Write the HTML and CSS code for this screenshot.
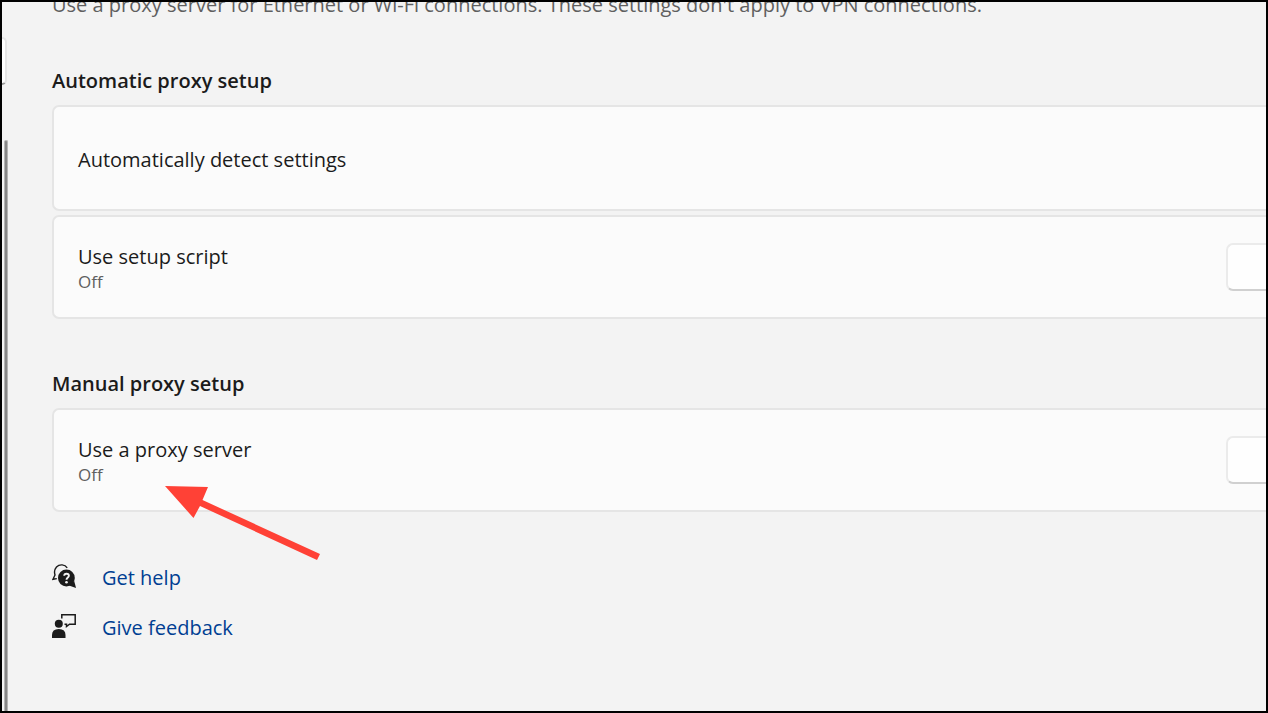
FILE: index.html
```html
<!DOCTYPE html>
<html lang="en">
<head>
  <meta charset="UTF-8" />
  <meta name="viewport" content="width=device-width, initial-scale=1.0"/>
  <title>Proxy</title>
  <link rel="stylesheet" href="styles.css">
</head>
<body>
  <div class="window">
    <aside class="sidebar">
      <div class="search-edge"></div>
      <div class="scrollbar"></div>
    </aside>

    <main class="content">
      <p class="intro">Use a proxy server for Ethernet or Wi-Fi connections. These settings don't apply to VPN connections.</p>

      <section class="group">
        <h2>Automatic proxy setup</h2>
        <div class="card card-tall">
          <div class="card-title">Automatically detect settings</div>
        </div>
        <div class="card">
          <div class="card-text">
            <div class="card-title" id="script-title">Use setup script</div>
            <div class="card-status">Off</div>
          </div>
          <button class="card-button" type="button" aria-labelledby="script-title"></button>
        </div>
      </section>

      <section class="group">
        <h2>Manual proxy setup</h2>
        <div class="card">
          <div class="card-text">
            <div class="card-title" id="proxy-title">Use a proxy server</div>
            <div class="card-status">Off</div>
          </div>
          <button class="card-button" type="button" aria-labelledby="proxy-title"></button>
          <svg class="arrow" width="158" height="76" viewBox="0 0 158 76" aria-hidden="true">
            <path d="M0 0L43 1L37.500 14L155 68L152 74L35 20L28.500 32Z" fill="#ff4136"/>
          </svg>
        </div>
      </section>

      <nav class="links">
        <a href="#">
          <svg width="24" height="24" viewBox="0 0 24 24" aria-hidden="true">
            <path d="M15.200 3.800C13 .2 7.500 -.2 4.500 3C2.300 5.500 2.200 8.500 3 11L1 15.300L4.800 14.600" fill="none" stroke="#1b1b1b" stroke-width="1.400"/>
            <circle cx="14.400" cy="14" r="8.400" fill="#1b1b1b"/>
            <path d="M22.200 17L24 24L17 21.500Z" fill="#1b1b1b"/>
            <path d="M12.200 11.800C12.200 9 16.900 9 16.900 11.800C16.900 13.600 14.500 13.600 14.500 15.800" fill="none" stroke="#f3f3f3" stroke-width="1.900"/>
            <circle cx="14.500" cy="18.200" r="1.300" fill="#f3f3f3"/>
          </svg>
          <span>Get help</span>
        </a>
        <a href="#">
          <svg width="24" height="24" viewBox="0 0 24 24" aria-hidden="true">
            <circle cx="6.800" cy="9.800" r="4" fill="#1b1b1b"/>
            <path d="M0 24V21Q0 15 6.800 15T13.500 21V24Z" fill="#1b1b1b"/>
            <path d="M9.800 4.500V.8H23.200V10.200H17.500L14.500 12.500V10.200H12.500" fill="none" stroke="#1b1b1b" stroke-width="1.500"/>
          </svg>
          <span>Give feedback</span>
        </a>
      </nav>
    </main>
  </div>
</body>
</html>
```
FILE: styles.css
```css
* {
  box-sizing: border-box;
}

body {
  margin: 0;
  font-family: "Segoe UI", "Open Sans", "Noto Sans", sans-serif;
  font-size: 20px;
  line-height: 28px;
  color: #1b1b1b;
  background: #f3f3f3;
}

.window {
  display: flex;
  height: 100vh;
  border: 2px solid #000;
  overflow: hidden;
}

.sidebar {
  display: flex;
  flex-direction: column;
  align-items: flex-start;
  width: 50px;
  flex-shrink: 0;
  padding-top: 35px;
}

.search-edge {
  width: 5px;
  height: 48px;
  background: #fff;
  border: 2px solid #e5e5e5;
  border-left: 0;
  border-bottom-color: #999;
  border-radius: 0 6px 6px 0;
}

.scrollbar {
  flex: 1;
  width: 4px;
  margin: 55px 0 0 2px;
  background: #868686;
  border: 1px solid #b4b4b4;
  border-bottom: 0;
  border-radius: 2px 2px 0 0;
}

.content {
  flex: 1;
  min-width: 0;
  margin-top: -11px;
}

.intro {
  margin: 0 0 48px;
  color: #5f5f5f;
  white-space: nowrap;
}

.group {
  margin-bottom: 51px;
}

.group h2 {
  margin: 0 0 10px;
  font-size: 20px;
  line-height: 28px;
  font-weight: 600;
}

.card {
  position: relative;
  display: flex;
  align-items: center;
  justify-content: space-between;
  min-height: 104px;
  padding-left: 24px;
  background: #fbfbfb;
  border: 2px solid #e5e5e5;
  border-right: 0;
  border-radius: 7px 0 0 7px;
}

.card + .card {
  margin-top: 4px;
}

.card-tall {
  min-height: 106px;
  padding-top: 4px;
}

.card-text {
  padding-top: 2px;
}

.card-status {
  font-size: 17px;
  line-height: 22px;
  color: #5f5f5f;
}

.card-button {
  width: 40px;
  height: 48px;
  padding: 0;
  background: #fefefe;
  border: 2px solid #ebebeb;
  border-right: 0;
  border-bottom-color: #d0d0d0;
  border-radius: 7px 0 0 7px;
}

.arrow {
  position: absolute;
  top: 76px;
  left: 111px;
}

.links {
  display: flex;
  flex-direction: column;
  align-items: flex-start;
  margin-top: -12px;
}

.links a {
  display: flex;
  align-items: center;
  gap: 26px;
  height: 50px;
  color: #003e92;
  text-decoration: none;
}

.links span {
  padding-top: 4px;
}
```
